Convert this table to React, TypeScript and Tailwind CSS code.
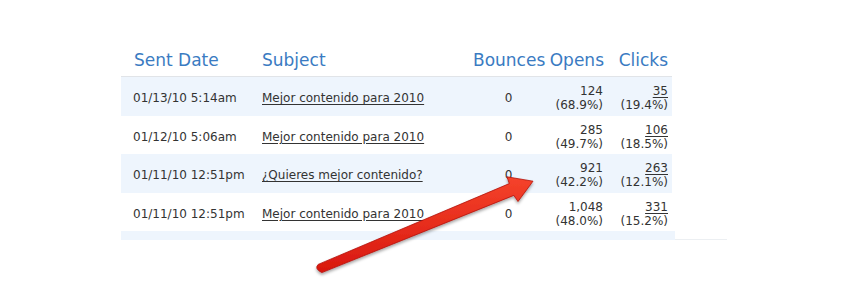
import React from "react";

interface Campaign { date: string; subject: string; bounces: number; opens: string; opensPct: string; clicks: string; clicksPct: string; }

const ROWS: Campaign[] = [
  { date: "01/13/10 5:14am", subject: "Mejor contenido para 2010", bounces: 0, opens: "124", opensPct: "(68.9%)", clicks: "35", clicksPct: "(19.4%)" },
  { date: "01/12/10 5:06am", subject: "Mejor contenido para 2010", bounces: 0, opens: "285", opensPct: "(49.7%)", clicks: "106", clicksPct: "(18.5%)" },
  { date: "01/11/10 12:51pm", subject: "¿Quieres mejor contenido?", bounces: 0, opens: "921", opensPct: "(42.2%)", clicks: "263", clicksPct: "(12.1%)" },
  { date: "01/11/10 12:51pm", subject: "Mejor contenido para 2010", bounces: 0, opens: "1,048", opensPct: "(48.0%)", clicks: "331", clicksPct: "(15.2%)" },
];

const COLS = "grid w-[551px] grid-cols-[129px_223px_72px_62px_65px]";

function Arrow() {
  return (
    <svg className="absolute inset-0 pointer-events-none" width="858" height="295" viewBox="0 0 858 295">
      <defs>
        <linearGradient id="arrowRed" x1="0" y1="0" x2="0" y2="1">
          <stop offset="0" stopColor="#f5432b" />
          <stop offset="1" stopColor="#d8170e" />
        </linearGradient>
        <filter id="arrowShadow" x="-10%" y="-30%" width="120%" height="160%">
          <feDropShadow dx="0" dy="2" stdDeviation="1.6" floodColor="#000" floodOpacity="0.35" />
        </filter>
      </defs>
      <g filter="url(#arrowShadow)">
        <path
          d="M321.8 272.6 L513.8 195.4 L518 201.5 L533 181.2 L507 176.8 L509.3 183.6 L318.2 264.4 Q314 268.6 321.8 272.6 Z"
          fill="url(#arrowRed)"
          stroke="#b3120a"
          strokeWidth="0.8"
          strokeLinejoin="round"
        />
      </g>
    </svg>
  );
}

export default function App() {
  return (
    <div className="relative w-[858px] h-[295px] bg-white overflow-hidden" style={{ fontFamily: '"DejaVu Sans", Verdana, sans-serif' }}>
      <div className="pl-[121px] pt-[44px]">
        <div className={`${COLS} h-[33px] items-center text-[17px] leading-[20px] text-[#3a7bc2] border-b border-[#e1e4e8]`}>
          <div className="pl-[13px]">Sent Date</div>
          <div className="pl-[12px]">Subject</div>
          <div className="text-center whitespace-nowrap">Bounces</div>
          <div className="text-right pr-[3px]">Opens</div>
          <div className="text-right pr-[4px]">Clicks</div>
        </div>
        {ROWS.map((r, i) => (
          <div key={i} className={`${COLS} h-[38.5px] pt-[4px] items-center text-[12px] leading-[14px] text-[#333] ${i % 2 === 0 ? "bg-[#eef5fd]" : "bg-white"}`}>
            <div className="pl-[12px] whitespace-nowrap">{r.date}</div>
            <div className="pl-[12px] whitespace-nowrap"><span className="underline underline-offset-2">{r.subject}</span></div>
            <div className="text-center pr-[1px]">{r.bounces}</div>
            <div className="text-right pr-[4px]">
              <div>{r.opens}</div>
              <div>{r.opensPct}</div>
            </div>
            <div className="text-right pr-[4px]">
              <div><span className="underline underline-offset-2">{r.clicks}</span></div>
              <div>{r.clicksPct}</div>
            </div>
          </div>
        ))}
        <div className="flex items-end">
          <div className="w-[554px] h-[9px] bg-[#eef5fd]" />
          <div className="w-[52px] h-[1px] bg-[#eceff2]" />
        </div>
      </div>
      <Arrow />
    </div>
  );
}
